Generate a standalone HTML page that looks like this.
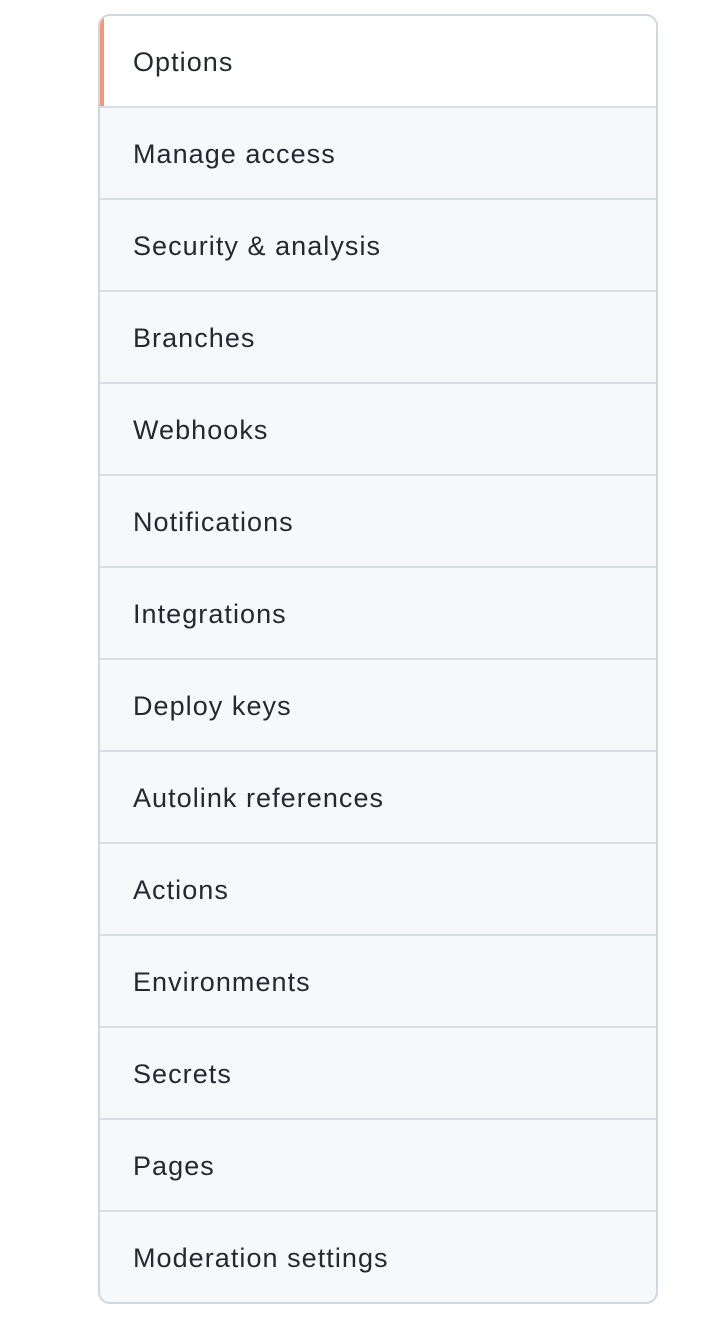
<!DOCTYPE html>
<html><head><style>
body{margin:0;background:#fff;width:706px;height:1336px;font-family:"Liberation Sans",Arial,sans-serif;}
.box{position:absolute;left:98px;top:14px;width:556px;border:2px solid #d0d7de;border-radius:12px;overflow:hidden;background:#f6f8fa;}
.it{height:90px;border-top:2px solid #d8dee4;font-size:27px;letter-spacing:1.05px;color:#24292f;line-height:92px;padding-left:33px;box-sizing:content-box;overflow:hidden;}
.it:first-child{border-top:none;height:90px;background:#fff;position:relative;}
.it:first-child:before{content:"";position:absolute;left:0;top:0;bottom:0;width:4px;background:#f09878;}
</style></head><body>
<div class="box">
<div class="it">Options</div>
<div class="it">Manage access</div>
<div class="it">Security &amp; analysis</div>
<div class="it">Branches</div>
<div class="it">Webhooks</div>
<div class="it">Notifications</div>
<div class="it">Integrations</div>
<div class="it">Deploy keys</div>
<div class="it">Autolink references</div>
<div class="it">Actions</div>
<div class="it">Environments</div>
<div class="it">Secrets</div>
<div class="it">Pages</div>
<div class="it">Moderation settings</div>
</div>
</body></html>
